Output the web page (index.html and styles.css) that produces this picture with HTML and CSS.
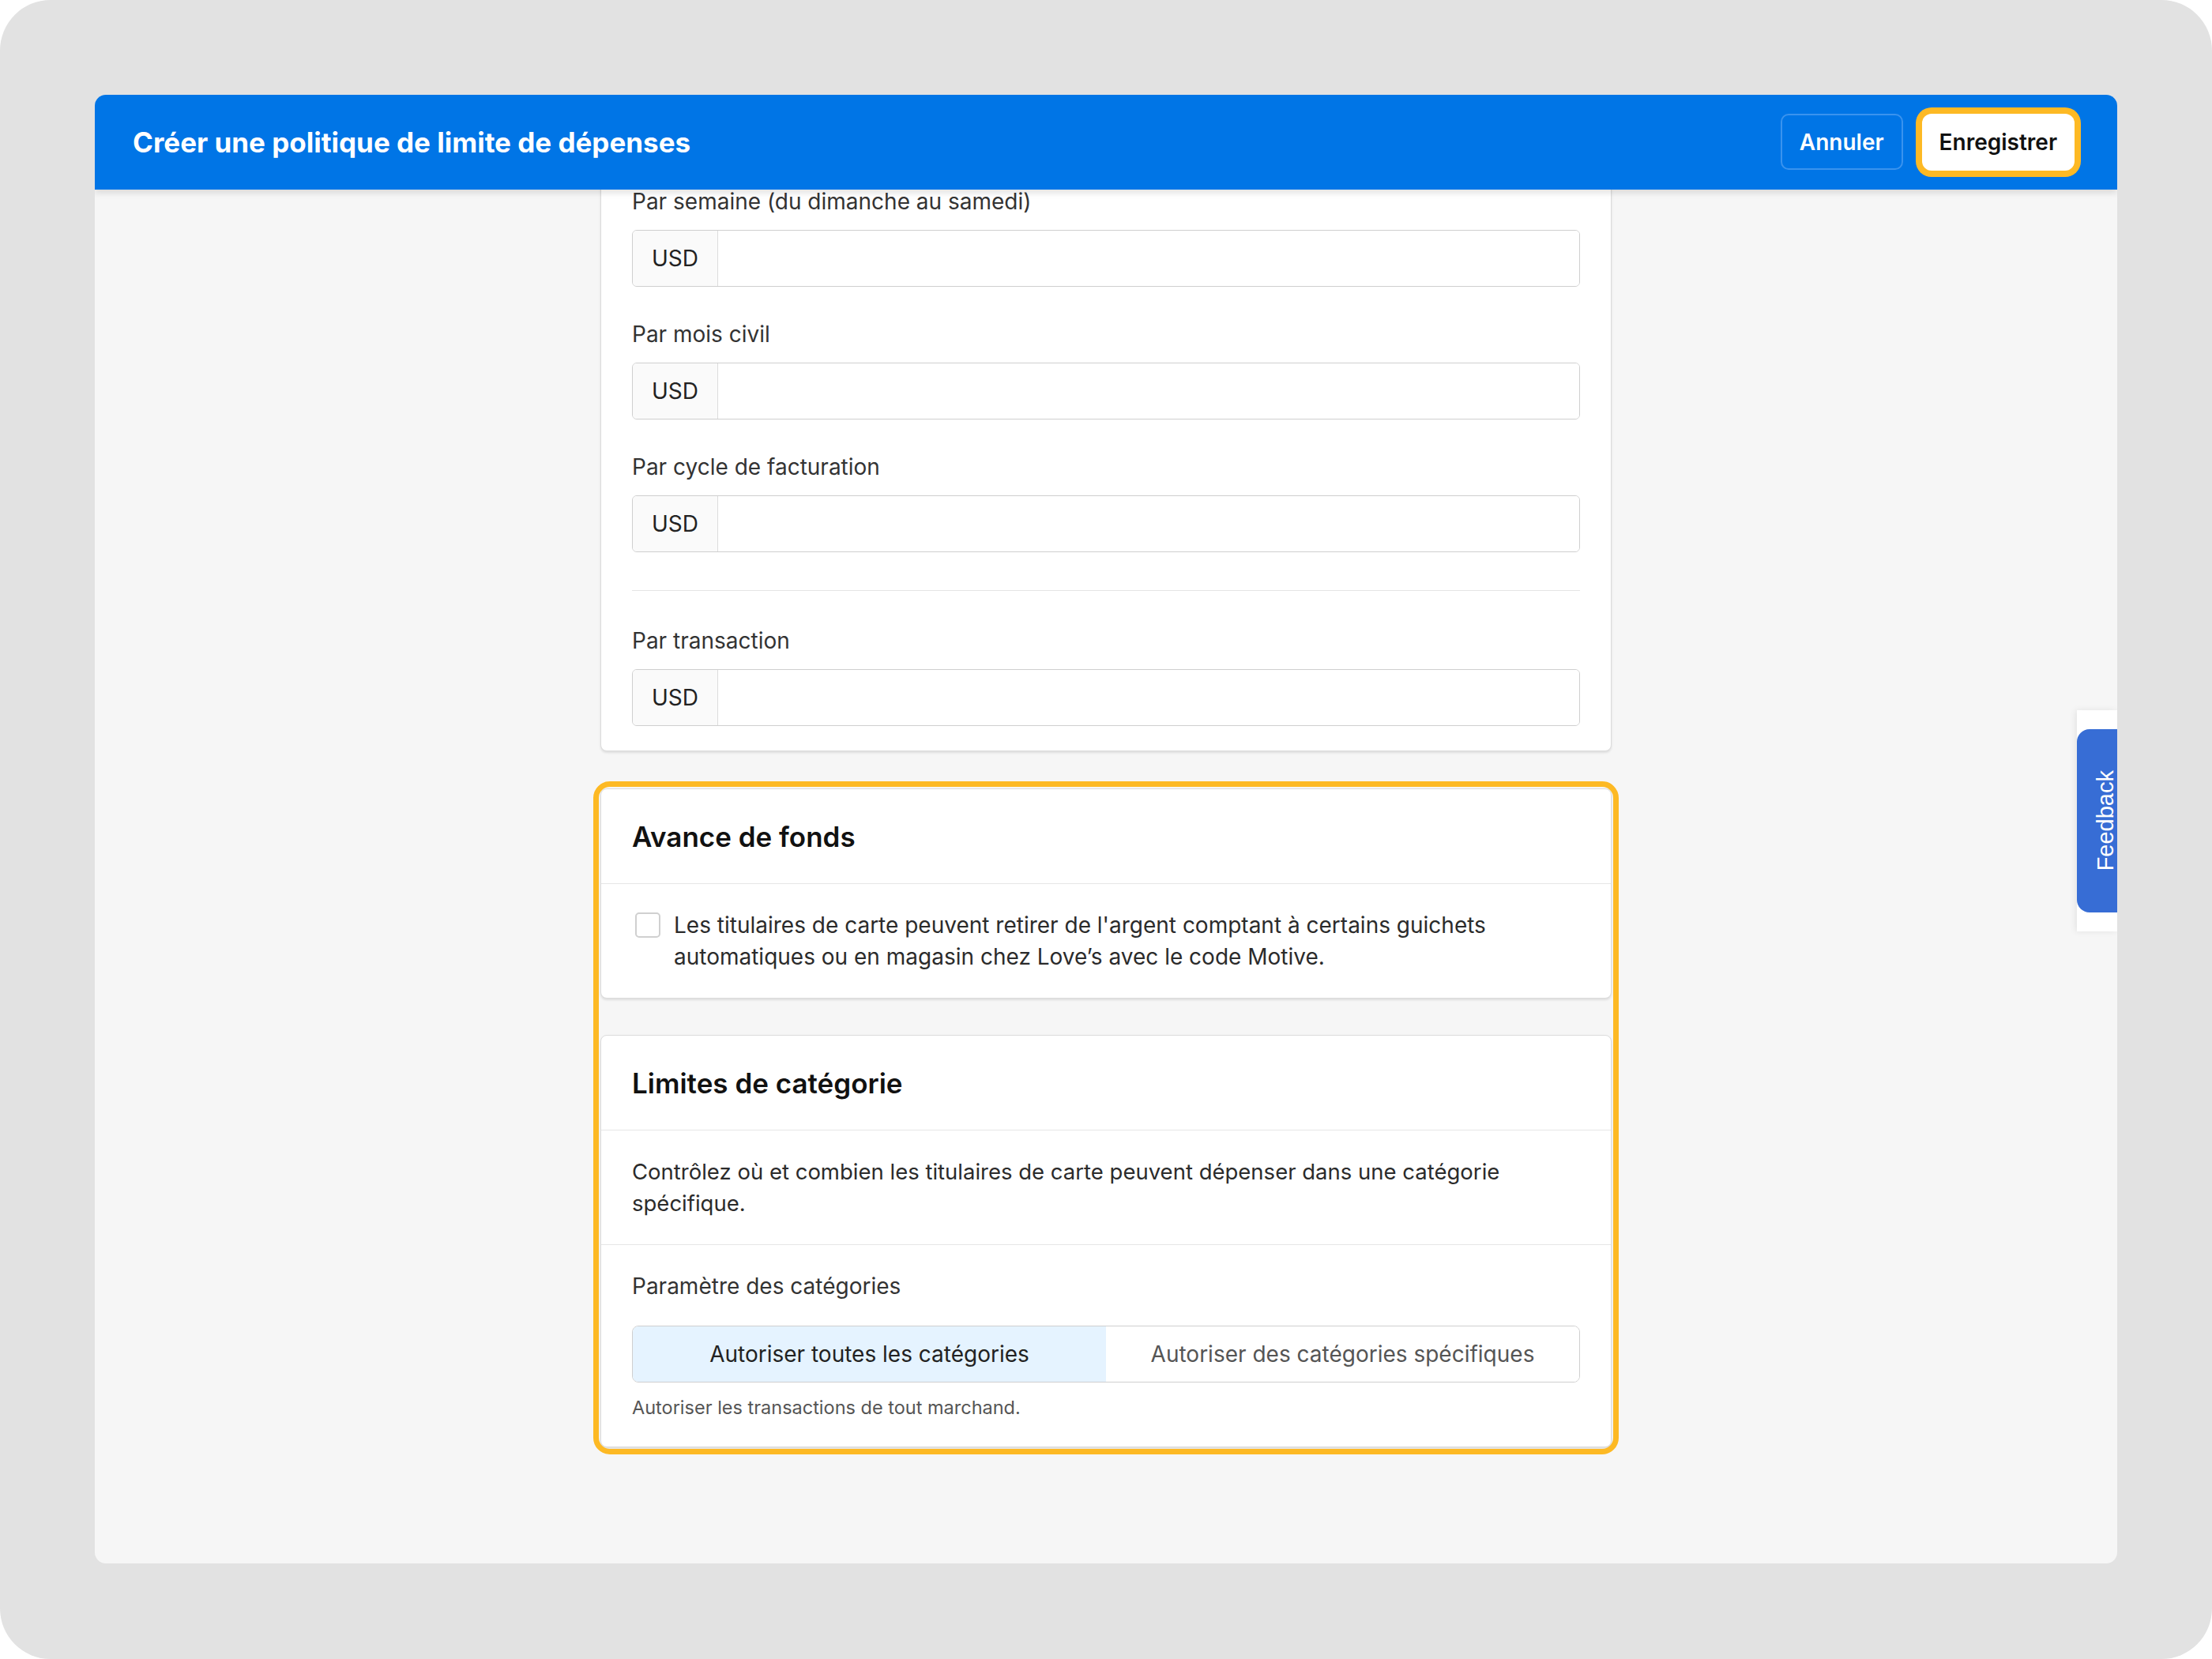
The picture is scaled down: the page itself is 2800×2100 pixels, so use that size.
FILE: index.html
```html
<!DOCTYPE html>
<html lang="fr">
<head>
    <meta charset="UTF-8">
    <title>Créer une politique de limite de dépenses</title>
    <link rel="stylesheet" href="styles.css">
</head>
<body>

<div class="frame">
    <div class="modal">
        <header class="modal-header">
            <h1>Créer une politique de limite de dépenses</h1>
            <div class="actions">
                <button class="btn btn-ghost">Annuler</button>
                <button class="btn btn-save">Enregistrer</button>
            </div>
        </header>

        <div class="modal-body">
            <div class="card card-limits">
                <div class="field">
                    <label>Par semaine (du dimanche au samedi)</label>
                    <div class="input-group">
                        <span class="addon">USD</span>
                        <input type="text">
                    </div>
                </div>
                <div class="field">
                    <label>Par mois civil</label>
                    <div class="input-group">
                        <span class="addon">USD</span>
                        <input type="text">
                    </div>
                </div>
                <div class="field">
                    <label>Par cycle de facturation</label>
                    <div class="input-group">
                        <span class="addon">USD</span>
                        <input type="text">
                    </div>
                </div>
                <hr class="divider">
                <div class="field">
                    <label>Par transaction</label>
                    <div class="input-group">
                        <span class="addon">USD</span>
                        <input type="text">
                    </div>
                </div>
            </div>

            <div class="highlight">
                <section class="card">
                    <div class="card-header">
                        <h2>Avance de fonds</h2>
                    </div>
                    <div class="card-section check-row">
                        <span class="checkbox"></span>
                        <p>Les titulaires de carte peuvent retirer de l'argent comptant à certains guichets automatiques ou en magasin chez Love’s avec le code Motive.</p>
                    </div>
                </section>

                <section class="card">
                    <div class="card-header">
                        <h2>Limites de catégorie</h2>
                    </div>
                    <div class="card-section">
                        <p class="desc">Contrôlez où et combien les titulaires de carte peuvent dépenser dans une catégorie spécifique.</p>
                    </div>
                    <div class="card-section last">
                        <label>Paramètre des catégories</label>
                        <div class="segmented">
                            <button class="segment active">Autoriser toutes les catégories</button>
                            <button class="segment">Autoriser des catégories spécifiques</button>
                        </div>
                        <p class="help">Autoriser les transactions de tout marchand.</p>
                    </div>
                </section>
            </div>
        </div>

        <div class="feedback">
            <div class="feedback-tab"><span>Feedback</span></div>
        </div>
    </div>
</div>

</body>
</html>
```

FILE: styles.css
```css
* {
    box-sizing: border-box;
}
body {
    margin: 0;
    background-color: #fff;
    font-family: Inter, "Noto Sans", sans-serif;
    color: #2b2b2b;
}
.frame {
    width: 2800px;
    height: 2100px;
    padding: 120px 120px 121px;
    background-color: #e2e2e2;
    border-radius: 64px;
}
.modal {
    position: relative;
    height: 100%;
    display: flex;
    flex-direction: column;
    border-radius: 14px;
    overflow: hidden;
    background-color: #f6f6f6;
}
.modal-header {
    position: relative;
    z-index: 2;
    height: 120px;
    flex-shrink: 0;
    display: flex;
    align-items: center;
    justify-content: space-between;
    padding: 0 54px 0 48px;
    background-color: #0075e6;
    box-shadow: 0 4px 8px rgba(0, 0, 0, 0.12);
}
.modal-header h1 {
    margin: 0;
    font-size: 35px;
    font-weight: 700;
    color: #fff;
}
.actions {
    display: flex;
    gap: 24px;
}
.btn {
    height: 72px;
    padding: 0 22px;
    font-family: inherit;
    font-size: 28px;
    font-weight: 600;
    border-radius: 10px;
}
.btn-ghost {
    background: transparent;
    color: #fff;
    border: 2px solid #3a93ee;
    height: 71px;
}
.btn-save {
    background: #fff;
    color: #111;
    border: none;
    border-radius: 12px;
    box-shadow: 0 0 0 8px #fdb924;
}

.modal-body {
    flex: 1;
    overflow: hidden;
    display: flex;
    flex-direction: column;
    align-items: center;
}
.card {
    width: 1280px;
    background-color: #fff;
    border: 1px solid #dcdcdc;
    border-radius: 8px;
    box-shadow: 0 2px 3px rgba(0, 0, 0, 0.1);
}
.card-limits {
    margin-top: -20px;
    padding: 19px 39px 31px;
}
.field + .field {
    margin-top: 45px;
}
label {
    display: block;
    font-size: 28px;
    line-height: 40px;
    color: #333;
}
.field label {
    line-height: 30px;
    margin-bottom: 21px;
}
.input-group {
    display: flex;
    height: 72px;
    border: 1px solid #cfcfcf;
    border-radius: 6px;
    overflow: hidden;
}
.addon {
    display: flex;
    align-items: center;
    padding: 0 24px;
    background-color: #fafafa;
    border-right: 1px solid #dcdcdc;
    font-size: 28px;
    color: #222;
}
.input-group input {
    flex: 1;
    border: none;
    outline: none;
}
.divider {
    margin: 48px 0 48px;
    border: none;
    border-top: 1px solid #e4e4e4;
}

.highlight {
    width: 1280px;
    margin-top: 47px;
    display: flex;
    flex-direction: column;
    gap: 46px;
    border-radius: 12px;
    outline: 7px solid #fdb924;
    outline-offset: 2px;
}
.card-header {
    padding: 40px 39px 39px;
    border-bottom: 1px solid #e6e6e6;
}
.card-header h2 {
    margin: 0;
    font-size: 35px;
    line-height: 40px;
    font-weight: 600;
    color: #111;
}
.card-section {
    padding: 32px 39px 32px;
    border-bottom: 1px solid #e6e6e6;
}
.card-section.last {
    border-bottom: none;
    padding-bottom: 33px;
}
.card-section p {
    margin: 0;
    font-size: 28px;
    line-height: 40px;
    color: #2b2b2b;
}
.card-section p.desc {
    font-size: 27.5px;
}
.check-row {
    display: flex;
    align-items: flex-start;
    gap: 17px;
    border-bottom: none;
}
.checkbox {
    flex-shrink: 0;
    width: 32px;
    height: 32px;
    margin: 4px 0 0 4px;
    border: 2px solid #d0d0d0;
    border-radius: 5px;
    background: #fff;
}

.segmented {
    display: flex;
    margin-top: 30px;
    height: 72px;
    border: 1px solid #cfcfcf;
    border-radius: 8px;
    overflow: hidden;
}
.segment {
    flex: 1;
    border: none;
    background: #fff;
    font-family: inherit;
    font-size: 28px;
    color: #555;
}
.segment.active {
    background-color: #e5f3ff;
    color: #222;
}
.card-section p.help {
    margin-top: 16px;
    font-size: 23.5px;
    line-height: 32px;
    color: #555;
}

.feedback {
    position: absolute;
    right: 0;
    top: 779px;
    width: 51px;
    padding: 24px 0;
    background-color: #fff;
    box-shadow: -2px 0 8px rgba(0, 0, 0, 0.08);
}
.feedback-tab {
    height: 232px;
    display: flex;
    align-items: center;
    justify-content: flex-end;
    background-color: #376dd5;
    border-radius: 16px 0 0 16px;
}
.feedback-tab span {
    writing-mode: vertical-rl;
    transform: rotate(180deg);
    font-family: "Liberation Sans", Arial, sans-serif;
    font-size: 29px;
    line-height: 29px;
    color: #fff;
}
```
